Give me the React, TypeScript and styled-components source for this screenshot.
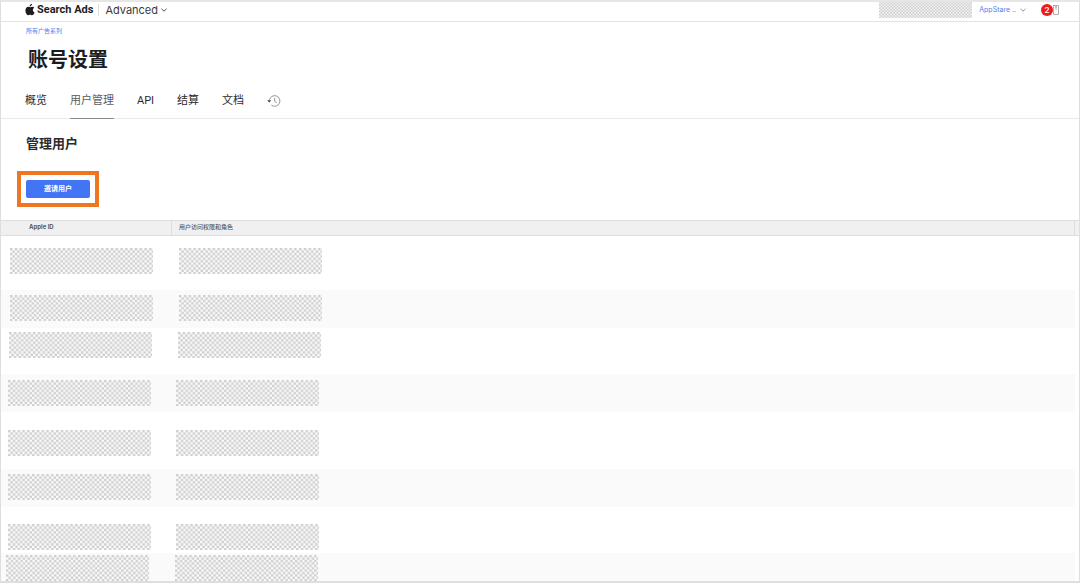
import React, { useId } from 'react';
import styled, { createGlobalStyle } from 'styled-components';

const GlobalStyle = createGlobalStyle`
  * {
    box-sizing: border-box;
  }

  body {
    margin: 0;
    background-color: #ffffff;
    color: #2b2b2d;
    font-family: Inter, 'Noto Sans CJK SC', sans-serif;
  }
`;

const Page = styled.div`
  height: 100vh;
  overflow: hidden;
  border: 1px solid #dedede;
  border-top: 2px solid #e6e6e6;
  border-bottom-width: 2px;
`;

const TopBar = styled.header`
  display: flex;
  align-items: center;
  height: 20px;
  padding: 0 20px 4px 24px;
  border-bottom: 1px solid #e3e3e3;
`;

const Brand = styled.a`
  display: flex;
  align-items: center;
  gap: 2px;
  color: #1d1d1f;
  font-family: Roboto, sans-serif;
  font-size: 11px;
  line-height: 16px;
  font-weight: 700;
  text-decoration: none;
  white-space: nowrap;
`;

const PlanButton = styled.button`
  display: flex;
  align-items: center;
  gap: 3px;
  height: 12px;
  margin-left: 5px;
  padding: 0 0 0 6px;
  border: none;
  border-left: 1px solid #dddddd;
  background-color: transparent;
  color: #3a3a3c;
  font-family: inherit;
  font-size: 11px;
  line-height: 12px;
`;

const Account = styled.div`
  display: flex;
  align-items: center;
  height: 17px;
  margin-left: auto;
`;

const AccountButton = styled.button`
  display: flex;
  align-items: center;
  gap: 4px;
  margin-left: 7px;
  padding: 0;
  border: none;
  background-color: transparent;
  color: #4a80f0;
  font-family: inherit;
  font-size: 7px;
  line-height: 12px;
`;

const Notice = styled.button`
  display: flex;
  align-items: center;
  margin-left: 15px;
  padding: 0;
  border: none;
  background-color: transparent;

  span {
    width: 12px;
    height: 12px;
    border-radius: 50%;
    background-color: #ea1c1c;
    color: #ffffff;
    font-family: Inter, sans-serif;
    font-size: 8px;
    font-weight: 600;
    line-height: 12px;
    text-align: center;
  }
`;

const MosaicSvg = styled.svg`
  display: block;
  background-color: #ffffff;
`;

const Heading = styled.div`
  padding: 4px 25px 0;

  a {
    display: block;
    color: #4a80f0;
    font-size: 6px;
    line-height: 10px;
    text-decoration: none;
  }

  h1 {
    margin: 10px 0 0 2px;
    color: #1d1d1f;
    font-size: 20px;
    font-weight: 600;
    line-height: 28px;
  }
`;

const Tabs = styled.nav`
  display: flex;
  gap: 23px;
  height: 45px;
  padding: 0 24px;
  border-bottom: 1px solid #e9e9e9;
  font-family: Roboto, 'Noto Sans CJK SC', sans-serif;
`;

const Tab = styled.a<{ $active?: boolean }>`
  display: flex;
  align-items: center;
  height: 45px;
  padding-top: 9px;
  border-bottom: 1px solid ${({ $active }) => ($active ? '#8a8a8a' : 'transparent')};
  color: ${({ $active }) => ($active ? '#5c5c5e' : '#2b2b2d')};
  font-size: 11px;
  line-height: 18px;
  text-decoration: none;
`;

const Manage = styled.section`
  padding: 14px 16px 13px;

  h2 {
    margin: 0 0 18px 9px;
    font-size: 13px;
    font-weight: 600;
    line-height: 20px;
  }
`;

const Highlight = styled.div`
  width: fit-content;
  padding: 5px;
  border: 4px solid #ee7623;
`;

const InviteButton = styled.button`
  display: block;
  width: 64px;
  height: 18px;
  padding: 0;
  border: none;
  border-radius: 2px;
  background-color: #4175f5;
  color: #ffffff;
  font-family: inherit;
  font-size: 7px;
  font-weight: 600;
  line-height: 18px;
`;

const UserTable = styled.table`
  width: 100%;
  border-collapse: separate;
  border-spacing: 0;
  table-layout: fixed;

  th {
    height: 16px;
    padding: 0 0 0 7px;
    border: 1px solid #dedede;
    border-width: 1px 1px 1px 0;
    background-color: #f0f0f0;
    color: #58585a;
    font-size: 6px;
    font-weight: 500;
    line-height: 12px;
    text-align: left;
    vertical-align: top;
  }

  th:first-child {
    padding-left: 28px;
    font-weight: 700;
  }

  th:last-child {
    border-right: none;
  }
`;

const Row = styled.tr<{ $height: number }>`
  height: ${({ $height }) => $height}px;

  &:nth-child(even) {
    background: linear-gradient(#fafafa, #fafafa) no-repeat 0 0 / calc(100% - 4px) 100%;
  }
`;

const Cell = styled.td<{ $top: number; $left: number }>`
  padding: ${({ $top }) => $top}px 0 0 ${({ $left }) => $left}px;
  vertical-align: top;
`;

const rows = [
  { height: 54, top: 12, idLeft: 9, roleLeft: 7 },
  { height: 38, top: 5, idLeft: 9, roleLeft: 7 },
  { height: 46, top: 4, idLeft: 8, roleLeft: 6 },
  { height: 38, top: 6, idLeft: 7, roleLeft: 4 },
  { height: 57, top: 18, idLeft: 7, roleLeft: 4 },
  { height: 38, top: 5, idLeft: 7, roleLeft: 4 },
  { height: 46, top: 17, idLeft: 7, roleLeft: 4 },
  { height: 38, top: 2, idLeft: 5, roleLeft: 3 },
];

const tabs = ['概览', '用户管理', 'API', '结算', '文档'];

interface MosaicProps {
  width: number;
  height: number;
  cell?: number;
  base?: string;
}

const Mosaic = ({ width, height, cell = 2.4, base = '#fbfbfb' }: MosaicProps) => {
  const id = useId();
  const size = cell * 2;

  return (
    <MosaicSvg width={width} height={height} aria-hidden='true'>
      <pattern id={id} width={size} height={size} patternUnits='userSpaceOnUse'>
        <rect width={size} height={size} fill={base} />
        <path d={`M0 0h${cell}v${size}h${cell}v${-cell}H0z`} fill='#cfcfcf' />
      </pattern>
      <rect width={width} height={height} fill={`url(#${id})`} />
    </MosaicSvg>
  );
};

const AppleIcon = () => (
  <svg width='10' height='13' viewBox='0 0 20 25' fill='#1d1d1f' aria-hidden='true'>
    <path d='M14 1c.2 2.8-2 5.3-4.6 5.3C9.1 3.7 11.4 1.300 14 1z' />
    <path d='M18.600 8.800c-2 1.200-3 2.700-2.900 4.700.1 2.300 1.400 4 3.400 4.800-1 3-3 5.700-5.200 5.700-1.500 0-2-.9-3.800-.9s-2.400.9-3.800.9C3.600 24 .8 19.300.8 14.700c0-4.600 2.800-7.500 6-7.500 1.500 0 2.700 1 3.700 1 1 0 2.400-1.100 4.200-1.100 1.600 0 3 .6 3.900 1.700z' />
  </svg>
);

const Chevron = ({ color }: { color: string }) => (
  <svg width='6' height='4' viewBox='0 0 6 4' fill='none' stroke={color} strokeWidth='0.9' aria-hidden='true'>
    <path d='M.5.8 3 3.200 5.500.8' />
  </svg>
);

const HistoryIcon = () => (
  <svg width='14' height='12' viewBox='0 0 14 12' fill='none' stroke='#8a8a8c' strokeWidth='0.9' aria-hidden='true'>
    <path d='M2.400 5A5.300 5.300 0 1 1 4.300 10.100' />
    <path d='M7.700 2.800V6.400L9.800 7.800' />
    <path d='M.2 5.200h4L2.200 7.500z' fill='#3a3a3c' stroke='none' />
  </svg>
);

const App = () => {
  return (
    <Page>
      <GlobalStyle />
      <TopBar>
        <Brand href='#'>
          <AppleIcon />
          Search Ads
        </Brand>
        <PlanButton type='button'>
          Advanced
          <Chevron color='#3a3a3c' />
        </PlanButton>
        <Account>
          <Mosaic width={93} height={17} cell={1.6} base='#f3f3f3' />
          <AccountButton type='button'>
            AppStare ..
            <Chevron color='#8a8a8c' />
          </AccountButton>
          <Notice type='button' aria-label='通知'>
            <span>2</span>
            <svg width='6' height='10' viewBox='0 0 6 10' fill='none' stroke='#9a9a9c' strokeWidth='0.8' aria-hidden='true'>
              <path d='M0 .5h5.500v9H.5V.5M3 1v4M2 2h2' />
            </svg>
          </Notice>
        </Account>
      </TopBar>
      <main>
        <Heading>
          <a href='#'>所有广告系列</a>
          <h1>账号设置</h1>
        </Heading>
        <Tabs>
          {tabs.map((tab) => (
            <Tab key={tab} href='#' $active={tab === '用户管理'}>
              {tab}
            </Tab>
          ))}
          <Tab href='#' aria-label='历史记录'>
            <HistoryIcon />
          </Tab>
        </Tabs>
        <Manage>
          <h2>管理用户</h2>
          <Highlight>
            <InviteButton type='button'>邀请用户</InviteButton>
          </Highlight>
        </Manage>
        <UserTable>
          <colgroup>
            <col width='171' />
            <col />
            <col width='4' />
          </colgroup>
          <thead>
            <tr>
              <th>Apple ID</th>
              <th>用户访问权限和角色</th>
              <th aria-hidden='true' />
            </tr>
          </thead>
          <tbody>
            {rows.map((row, index) => (
              <Row key={index} $height={row.height}>
                <Cell $top={row.top} $left={row.idLeft}>
                  <Mosaic width={143} height={26} />
                </Cell>
                <Cell $top={row.top} $left={row.roleLeft} colSpan={2}>
                  <Mosaic width={143} height={26} />
                </Cell>
              </Row>
            ))}
          </tbody>
        </UserTable>
      </main>
    </Page>
  );
};

export default App;
